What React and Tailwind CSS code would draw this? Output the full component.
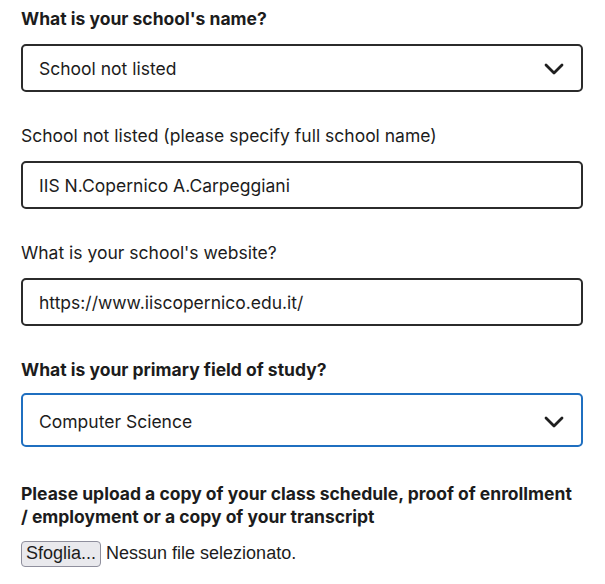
import React from 'react';

const Chevron = () => (
  <svg width="20" height="12" viewBox="0 0 20 12" fill="none" className="shrink-0">
    <path d="M2 2l8 8 8-8" stroke="#1f1f1f" strokeWidth="2.8" strokeLinecap="round" strokeLinejoin="round" />
  </svg>
);

const Label = ({ children, bold }) => (
  <div className={`text-[17.5px] leading-[24px] text-[#1c1c1c] mb-[13px] ${bold ? 'font-bold' : ''}`}>
    {children}
  </div>
);

export default function App() {
  return (
    <div className="bg-white w-[605px] h-[584px] overflow-hidden pl-[21px] pr-[22px] pt-[7px]" style={{ fontFamily: 'Inter, "Noto Sans", sans-serif' }}>
      <Label bold>What is your school's name?</Label>
      <div className="h-[48px] border-2 border-[#2b2b2b] rounded-[5px] flex items-center justify-between pl-[16px] pr-[17px] pt-[2px] text-[17.5px] text-[#1c1c1c]">
        <span>School not listed</span>
        <Chevron />
      </div>

      <div className="mt-[32px]">
        <Label>School not listed (please specify full school name)</Label>
        <div className="h-[48px] border-2 border-[#2b2b2b] rounded-[5px] flex items-center pl-[16px] pt-[2px] text-[17.5px] text-[#1c1c1c]">
          IIS N.Copernico A.Carpeggiani
        </div>
      </div>

      <div className="mt-[32px]">
        <Label>What is your school's website?</Label>
        <div className="h-[48px] border-2 border-[#2b2b2b] rounded-[5px] flex items-center pl-[16px] pt-[2px] text-[17.5px] text-[#1c1c1c]">
          https://www.iiscopernico.edu.it/
        </div>
      </div>

      <div className="mt-[32px]">
        <Label bold>What is your primary field of study?</Label>
        <div className="-mt-[2px] h-[54px] border-2 border-[#1f6fc0] rounded-[5px] flex items-center justify-between pl-[16px] pr-[17px] pt-[4px] text-[17.5px] text-[#1c1c1c]">
          <span>Computer Science</span>
          <Chevron />
        </div>
      </div>

      <div className="mt-[35px] pr-[6px] text-[17.5px] leading-[23px] font-bold text-[#1c1c1c]">
        Please upload a copy of your class schedule, proof of enrollment / employment or a copy of your transcript
      </div>

      <div className="mt-[12px] flex items-center gap-[5px] text-[18px] text-[#1c1c1c]" style={{ fontFamily: '"Liberation Sans", Arial, sans-serif' }}>
        <div className="h-[26px] px-[4px] flex items-center bg-[#e9e9ed] border border-[#8f8f9d] rounded-[4px]">Sfoglia...</div>
        <span>Nessun file selezionato.</span>
      </div>
    </div>
  );
}
